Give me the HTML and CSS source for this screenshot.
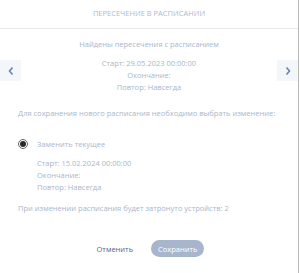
FILE: index.html
```html
<!DOCTYPE html>
<html lang="ru">
<head>
    <meta charset="UTF-8">
    <title>Пересечение в расписании</title>
    <link rel="stylesheet" href="styles.css">
</head>
<body>
    <div class="modal">
        <div class="modal-head">Пересечение в расписании</div>

        <div class="slider">
            <button class="nav nav-prev">
                <svg width="8" height="10" viewBox="0 0 8 10"><path d="M5.5 1.5 L2.5 5 L5.5 8.5" fill="none" stroke="#6585b0" stroke-width="1.6"/></svg>
            </button>
            <div class="slide">
                <p class="slide-title">Найдены пересечения с расписанием</p>
                <p>Старт: 29.05.2023 00:00:00</p>
                <p>Окончание:</p>
                <p>Повтор: Навсегда</p>
            </div>
            <button class="nav nav-next">
                <svg width="8" height="10" viewBox="0 0 8 10"><path d="M2.5 1.5 L5.5 5 L2.5 8.5" fill="none" stroke="#6585b0" stroke-width="1.6"/></svg>
            </button>
        </div>

        <p class="hint">Для сохранения нового расписания необходимо выбрать изменение:</p>

        <label class="option">
            <span class="radio"></span>
            <span>Заменить текущее</span>
        </label>
        <div class="option-info">
            <p>Старт: 15.02.2024 00:00:00</p>
            <p>Окончание:</p>
            <p>Повтор: Навсегда</p>
        </div>

        <p class="hint devices">При изменении расписания будет затронуто устройств: 2</p>

        <div class="actions">
            <button class="btn-cancel">Отменить</button>
            <button class="btn-save">Сохранить</button>
        </div>
    </div>
</body>
</html>
```

FILE: styles.css
```css
*{
    margin: 0;
    padding: 0;
    box-sizing: border-box;
}
body{
    background: #fff;
    font-family: "Open Sans", "Liberation Sans", sans-serif;
    font-size: 7.5px;
    color: #a9b6ca;
}
.modal{
    width: 299px;
    height: 273px;
    border-right: 1px solid #b9b9b9;
}
.modal-head{
    height: 29px;
    line-height: 27px;
    text-align: center;
    text-transform: uppercase;
    color: #aebbd0;
    border-bottom: 1px solid #e8e8f2;
}
/* slider */
.slider{
    display: flex;
    align-items: flex-start;
    margin-top: 9px;
}
.slide{
    flex: 1;
    text-align: center;
    line-height: 12px;
}
.slide-title{
    margin-bottom: 7px;
}
.nav{
    width: 21px;
    height: 21px;
    margin-top: 22px;
    border: none;
    background: #f4f7fa;
    display: flex;
    align-items: center;
    justify-content: center;
}
/* options */
.hint{
    padding: 0 18px;
    margin-top: 14px;
    line-height: 12px;
}
.option{
    display: flex;
    align-items: center;
    gap: 9px;
    padding: 0 18px;
    margin-top: 19px;
    line-height: 12px;
}
.radio{
    width: 10px;
    height: 10px;
    border: 1px solid #666;
    border-radius: 50%;
    display: flex;
    align-items: center;
    justify-content: center;
}
.radio::after{
    content: "";
    width: 6px;
    height: 6px;
    border-radius: 50%;
    background: #2a2a2a;
}
.option-info{
    padding-left: 37px;
    margin-top: 7px;
    line-height: 12px;
}
.devices{
    margin-top: 9px;
}
/* buttons */
.actions{
    display: flex;
    justify-content: center;
    align-items: center;
    gap: 18px;
    margin-top: 26px;
    padding-left: 3px;
}
.btn-cancel{
    border: none;
    background: none;
    font-family: inherit;
    font-size: 7.5px;
    color: #4f6992;
}
.btn-save{
    border: none;
    height: 17px;
    padding: 0 7px;
    border-radius: 9px;
    background: #a8b6cd;
    color: #fff;
    font-family: inherit;
    font-size: 7.5px;
}
```
